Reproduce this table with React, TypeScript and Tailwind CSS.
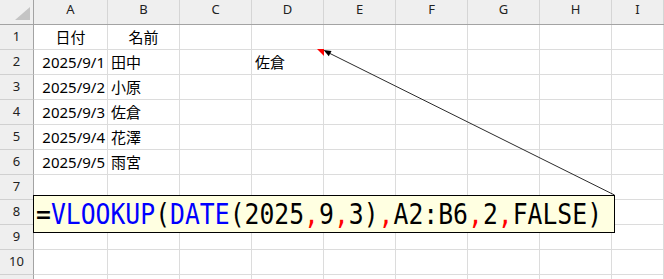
const cols = [
  { label: "A", w: "w-[74px]" },
  { label: "B", w: "w-[72px]" },
  { label: "C", w: "w-[72px]" },
  { label: "D", w: "w-[72px]" },
  { label: "E", w: "w-[72px]" },
  { label: "F", w: "w-[72px]" },
  { label: "G", w: "w-[72px]" },
  { label: "H", w: "w-[72px]" },
  { label: "I", w: "flex-1" },
];

type Cell = { text: string; align: "left" | "right" | "center"; note?: boolean };

const data: Record<number, Record<string, Cell>> = {
  1: { A: { text: "日付", align: "center" }, B: { text: "名前", align: "center" } },
  2: {
    A: { text: "2025/9/1", align: "right" },
    B: { text: "田中", align: "left" },
    D: { text: "佐倉", align: "left", note: true },
  },
  3: { A: { text: "2025/9/2", align: "right" }, B: { text: "小原", align: "left" } },
  4: { A: { text: "2025/9/3", align: "right" }, B: { text: "佐倉", align: "left" } },
  5: { A: { text: "2025/9/4", align: "right" }, B: { text: "花澤", align: "left" } },
  6: { A: { text: "2025/9/5", align: "right" }, B: { text: "雨宮", align: "left" } },
};

// row 11 only peeks in at the bottom edge, its number is out of view
const rows = [1, 2, 3, 4, 5, 6, 7, 8, 9, 10, 11];

const alignClass = {
  left: "justify-start pl-[3px]",
  right: "justify-end pr-[2px]",
  center: "justify-center",
};

// formula pieces: [text, colour]
const formula: [string, string][] = [
  ["=", "text-black"],
  ["VLOOKUP", "text-[#0000ff]"],
  ["(", "text-black"],
  ["DATE", "text-[#0000ff]"],
  ["(2025", "text-black"],
  [",", "text-[#ff0000]"],
  ["9", "text-black"],
  [",", "text-[#ff0000]"],
  ["3)", "text-black"],
  [",", "text-[#ff0000]"],
  ["A2:B6", "text-black"],
  [",", "text-[#ff0000]"],
  ["2", "text-black"],
  [",", "text-[#ff0000]"],
  ["FALSE)", "text-black"],
];

export default function App() {
  return (
    <div className="relative w-[664px] h-[279px] overflow-hidden bg-white font-['Noto_Sans','Noto_Sans_CJK_JP',sans-serif] text-[#222]">
      {/* column headers */}
      <div className="flex h-[25px] bg-[#efefef] border-b border-[#a3a3a3]">
        <div className="w-[34px] shrink-0 border-r border-[#a3a3a3]">
          <svg width="33" height="24" viewBox="0 0 33 24">
            <polygon points="15,20 30,20 30,7" fill="#c4c4c4" />
          </svg>
        </div>
        {cols.map((c) => (
          <div
            key={c.label}
            className={`${c.w} shrink-0 border-r border-[#d5d5d5] flex items-center justify-center pb-[4px] text-[13px]`}
          >
            {c.label}
          </div>
        ))}
      </div>

      {rows.map((r) => (
        <div key={r} className="flex h-[25px]">
          <div className="w-[34px] shrink-0 bg-[#efefef] border-r border-b border-r-[#a3a3a3] border-b-[#d0d0d0] flex items-center justify-center text-[13px]">
            {r < 11 ? r : ""}
          </div>
          {cols.map((c) => {
            const cell = data[r]?.[c.label];
            return (
              <div
                key={c.label}
                className={`${c.w} shrink-0 relative border-r border-b border-[#dcdcdc] flex items-center text-[15px] leading-none text-black ${
                  cell ? alignClass[cell.align] : ""
                }`}
              >
                {cell?.text}
                {cell?.note && (
                  <svg className="absolute -right-px -top-px" width="7" height="7" viewBox="0 0 7 7">
                    <polygon points="0,0 7,0 7,7" fill="#ff0000" />
                  </svg>
                )}
              </div>
            );
          })}
        </div>
      ))}

      {/* comment arrow */}
      <svg className="absolute left-0 top-0 pointer-events-none" width="664" height="279" viewBox="0 0 664 279">
        <line x1="614.5" y1="195" x2="329" y2="53" stroke="#2a2a2a" strokeWidth="1" />
        <polygon points="323.5,50 331.5,50.9 328.8,56.3" fill="#000" />
      </svg>

      {/* formula callout */}
      <div className="absolute left-[33px] top-[195px] w-[582px] h-[38px] border border-black bg-[#ffffe1] pl-[2px] pt-[4px] overflow-hidden">
        <div className="origin-left scale-x-[0.853] whitespace-nowrap font-['DejaVu_Sans_Mono',monospace] text-[29px] leading-[29px]">
          {formula.map(([t, cls], i) => (
            <span key={i} className={cls}>
              {t}
            </span>
          ))}
        </div>
      </div>
    </div>
  );
}
